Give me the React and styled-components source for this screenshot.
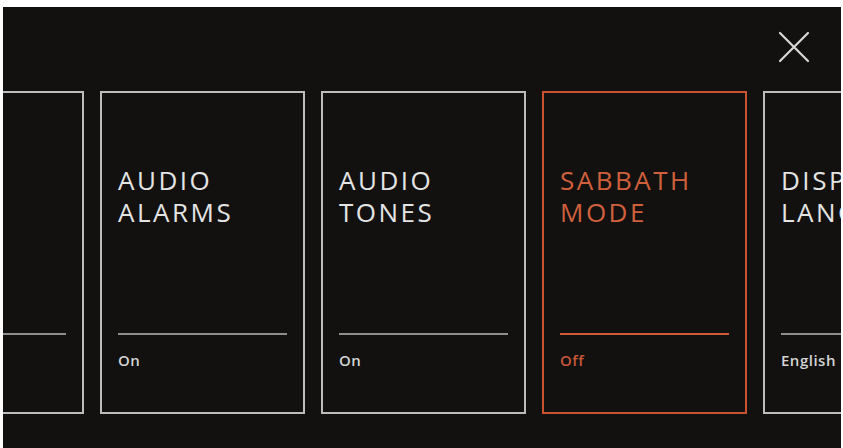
import React from "react";
import styled, { createGlobalStyle } from "styled-components";

const GlobalStyle = createGlobalStyle`
  html, body {
    margin: 0;
    padding: 0;
    background: #ffffff;
  }
  body {
    font-family: "Open Sans", "Liberation Sans", sans-serif;
  }
`;

const Screen = styled.div`
  width: 843px;
  height: 448px;
  padding: 7px 2px 0 3px;
  box-sizing: border-box;
  background: #ffffff;
`;

const Panel = styled.div`
  height: 100%;
  background: #121110;
  overflow: hidden;
  display: flex;
  flex-direction: column;
`;

const Header = styled.div`
  height: 84px;
  display: flex;
  justify-content: flex-end;
  align-items: flex-start;
  padding-right: 31px;
  flex-shrink: 0;
`;

const CloseButton = styled.button`
  margin-top: 24px;
  width: 32px;
  height: 32px;
  padding: 0;
  border: none;
  background: none;
  color: #d8d8d8;
  cursor: pointer;
`;

const Row = styled.div`
  display: flex;
  gap: 16px;
  margin-left: -124px;
`;

const Card = styled.div`
  flex: 0 0 205px;
  height: 323px;
  box-sizing: border-box;
  border: 2px solid ${(p) => (p.$active ? "#c9532f" : "#bcbcbc")};
  display: flex;
  flex-direction: column;
  padding: 0 16px;
  color: ${(p) => (p.$active ? "#d0603c" : "#e4e4e4")};
`;

const Title = styled.div`
  margin-top: 71px;
  font-size: 26px;
  line-height: 32px;
  letter-spacing: 2.5px;
  font-weight: 400;
  white-space: pre-line;
  flex: 1;
`;

const Footer = styled.div`
  height: 79px;
  border-top: 2px solid ${(p) => (p.$active ? "#cf5a38" : "#8e8e8e")};
  padding-top: 15px;
  box-sizing: border-box;
  font-size: 15px;
  font-weight: 600;
  letter-spacing: 0.5px;
  white-space: nowrap;
  color: ${(p) => (p.$active ? "#c9583a" : "#d4d4d4")};
`;

const settings = [
  { title: "", value: "" },
  { title: "AUDIO\nALARMS", value: "On" },
  { title: "AUDIO\nTONES", value: "On" },
  { title: "SABBATH\nMODE", value: "Off", active: true },
  { title: "DISPLAY\nLANGUAGE", value: "English" },
];

export default function App() {
  return (
    <>
      <GlobalStyle />
      <Screen>
        <Panel>
          <Header>
            <CloseButton aria-label="Close">
              <svg width="32" height="32" viewBox="0 0 32 32">
                <path
                  d="M2 2 L30 30 M30 2 L2 30"
                  stroke="currentColor"
                  strokeWidth="2.2"
                  strokeLinecap="round"
                  fill="none"
                />
              </svg>
            </CloseButton>
          </Header>
          <Row>
            {settings.map((s, i) => (
              <Card key={i} $active={s.active}>
                <Title>{s.title}</Title>
                <Footer $active={s.active}>{s.value}</Footer>
              </Card>
            ))}
          </Row>
        </Panel>
      </Screen>
    </>
  );
}
